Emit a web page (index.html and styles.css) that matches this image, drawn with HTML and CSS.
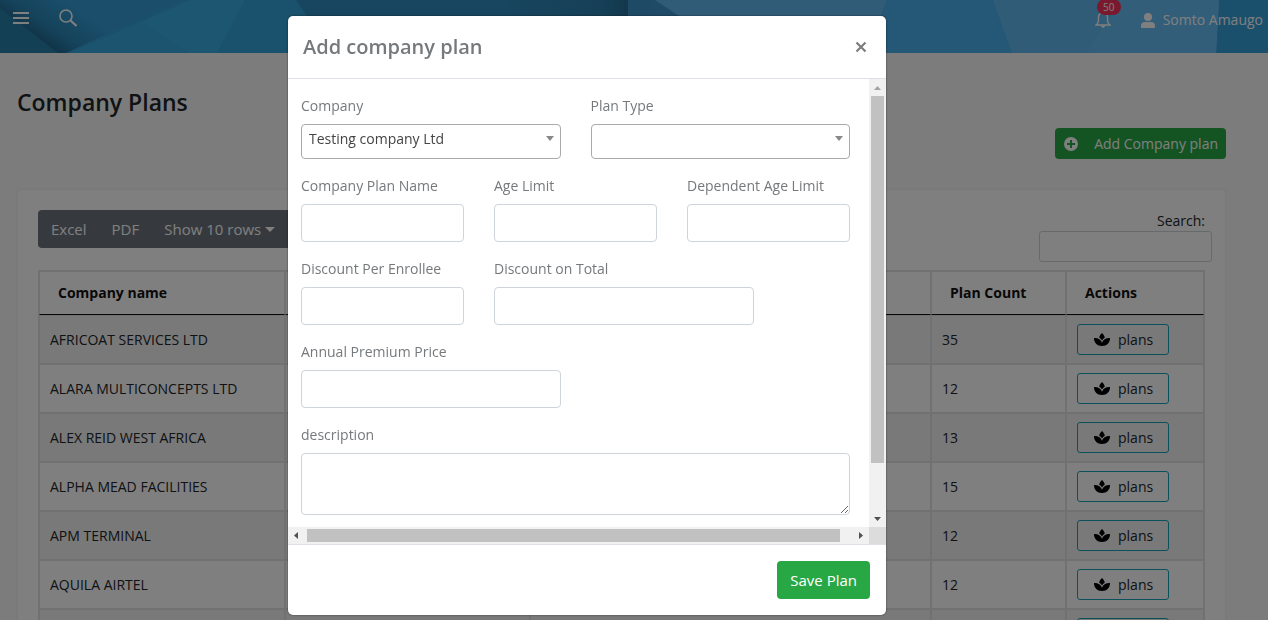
FILE: index.html
```html
<!DOCTYPE html>
<html lang="en">
<head>
<meta charset="utf-8">
<title>Company Plans</title>
<link rel="stylesheet" href="styles.css">
</head>
<body>
<svg class="sprite" aria-hidden="true">
  <symbol id="leaf" viewBox="0 0 18 14">
    <path d="M9 0c1.800 1.600 2.700 3.200 2.700 4.700C10.400 5.500 9.500 6.500 9 7.500 8.500 6.500 7.600 5.500 6.300 4.700 6.300 3.200 7.200 1.600 9 0z"/>
    <path d="M1 5c4-.2 7 1.600 8 4.700 1-3.100 4-4.900 8-4.700.1 4.700-3 8-8 8S.900 9.700 1 5z"/>
  </symbol>
  <symbol id="caret" viewBox="0 0 8 5"><path d="M0 0h8L4 5z"/></symbol>
</svg>

<header class="topbar">
  <svg class="topbar-art" viewBox="0 0 1268 53" preserveAspectRatio="none" aria-hidden="true">
    <defs>
      <linearGradient id="shade" gradientUnits="userSpaceOnUse" x1="24" y1="34" x2="52" y2="-8"><stop offset="0" stop-color="#1f6288"/><stop offset=".4" stop-color="#2b86b6"/><stop offset="1" stop-color="#349dd6"/></linearGradient>
      <linearGradient id="deep" x1="0" x2="1"><stop offset="0" stop-color="#308bbf"/><stop offset=".8" stop-color="#2c80ae"/><stop offset="1" stop-color="#266f98"/></linearGradient>
      <linearGradient id="steel" x1="0" x2="1"><stop offset="0" stop-color="#3d94cc"/><stop offset="1" stop-color="#4aaeee"/></linearGradient>
    </defs>
    <rect width="1268" height="53" fill="#35a1d9"/>
    <path d="M0 0h180L66 53H0z" fill="url(#shade)"/>
    <path d="M0 8l58 45H0z" fill="#2980ac"/>
    <path d="M190 0h55l-28 53H70z" fill="#38a9df"/>
    <path d="M190 0h55l-28 53h-28L143 22z" fill="#3aade2"/>
    <path d="M245 0h51l36 53H217z" fill="#35a3d9"/>
    <path d="M296 0h204v53H332z" fill="#308bbf"/>
    <path d="M500 0h128v53H500z" fill="url(#deep)"/>
    <path d="M628 0h372l12 53H628z" fill="url(#steel)"/>
    <path d="M655 0h232l-20 53H735z" fill="#60b8f0"/>
    <path d="M887 0h106l19 53H868z" fill="#4aaeec"/>
    <path d="M993 0h226l-3 53h-204z" fill="#60b8ee"/>
    <path d="M1120 0h99l-3 53h-129z" fill="#65bdf4"/>
  </svg>
  <nav class="topbar-row">
    <button class="icon-button" aria-label="Menu"><svg width="16" height="12" viewBox="0 0 16 12"><path d="M0 0h16v2H0zM0 5h16v2H0zM0 10h16v2H0z" fill="currentColor"/></svg></button>
    <button class="icon-button" aria-label="Search"><svg width="18" height="18" viewBox="0 0 18 18" fill="none" stroke="currentColor" stroke-width="1.600"><circle cx="7" cy="7" r="6"/><path d="M11.500 11.500l6 5.500" stroke-width="2.200"/></svg></button>
    <div class="account">
      <button class="bell icon-button" aria-label="Notifications">
        <svg width="16" height="16" viewBox="0 0 16 16"><path d="M1 13c1.500-1 2.500-2 2.500-5V5C3.500 2.500 5 1 8 1s4.500 1.500 4.500 4v3c0 3 1 4 2.500 5z" fill="none" stroke="currentColor" stroke-width="1.400"/><path d="M6 13.500h4c0 1.400-.8 2.200-2 2.200s-2-.8-2-2.200z" fill="currentColor"/></svg>
        <span class="badge">50</span>
      </button>
      <a class="user" href="#"><svg width="14" height="15" viewBox="0 0 14 15" fill="currentColor"><circle cx="7" cy="4" r="4"/><path d="M0 15v-2c0-2.500 1.500-4 4-4h6c2.500 0 4 1.500 4 4v1c0 .6-.4 1-1 1z"/></svg>Somto Amaugo</a>
    </div>
  </nav>
</header>

<main class="page">
  <h1 class="page-title">Company Plans</h1>
  <div class="page-actions">
    <button class="button add-button"><svg width="14" height="14" viewBox="0 0 14 14"><circle cx="7" cy="7" r="7" fill="#fff"/><path d="M3 7h8M7 3v8" stroke="#28a745" stroke-width="2"/></svg>Add Company plan</button>
  </div>
  <section class="card">
    <div class="tools">
      <div class="button-group">
        <button>Excel</button><button>PDF</button><button class="rows-button">Show 10 rows<svg width="10" height="5" viewBox="0 0 10 5" fill="currentColor"><path d="M0 0h10L5 5z"/></svg></button>
      </div>
      <div class="search"><label for="search">Search:</label><input id="search" type="search"></div>
    </div>
    <table class="plans">
      <colgroup><col class="col-name"><col class="col-second"><col><col class="col-count"><col class="col-actions"></colgroup>
      <thead><tr><th>Company name</th><th></th><th></th><th>Plan Count</th><th>Actions</th></tr></thead>
      <tbody>
        <tr><td>AFRICOAT SERVICES LTD</td><td></td><td></td><td>35</td><td><button class="plans-button"><svg width="18" height="14"><use href="#leaf"/></svg>plans</button></td></tr>
        <tr><td>ALARA MULTICONCEPTS LTD</td><td></td><td></td><td>12</td><td><button class="plans-button"><svg width="18" height="14"><use href="#leaf"/></svg>plans</button></td></tr>
        <tr><td>ALEX REID WEST AFRICA</td><td></td><td></td><td>13</td><td><button class="plans-button"><svg width="18" height="14"><use href="#leaf"/></svg>plans</button></td></tr>
        <tr><td>ALPHA MEAD FACILITIES</td><td></td><td></td><td>15</td><td><button class="plans-button"><svg width="18" height="14"><use href="#leaf"/></svg>plans</button></td></tr>
        <tr><td>APM TERMINAL</td><td></td><td></td><td>12</td><td><button class="plans-button"><svg width="18" height="14"><use href="#leaf"/></svg>plans</button></td></tr>
        <tr><td>AQUILA AIRTEL</td><td></td><td></td><td>12</td><td><button class="plans-button"><svg width="18" height="14"><use href="#leaf"/></svg>plans</button></td></tr>
        <tr><td></td><td></td><td></td><td></td><td><button class="plans-button" aria-label="Plans"></button></td></tr>
      </tbody>
    </table>
  </section>
</main>

<div class="backdrop">
  <div class="modal" role="dialog" aria-labelledby="modal-title">
    <div class="modal-header">
      <h2 id="modal-title">Add company plan</h2>
      <button class="close" aria-label="Close"><svg width="12" height="12" viewBox="0 0 12 12"><path d="M1.500 1.500l9 9M10.500 1.500l-9 9" stroke="currentColor" stroke-width="2.200"/></svg></button>
    </div>
    <div class="modal-body">
      <form class="plan-form" id="plan-form">
        <div class="field half"><label for="company">Company</label><div class="select-wrap"><select id="company"><option>Testing company Ltd</option></select><svg class="select-arrow" width="8" height="5"><use href="#caret"/></svg></div></div>
        <div class="field half"><label for="type">Plan Type</label><div class="select-wrap"><select id="type"><option></option></select><svg class="select-arrow" width="8" height="5"><use href="#caret"/></svg></div></div>
        <div class="field third"><label for="name">Company Plan Name</label><input id="name" type="text"></div>
        <div class="field third"><label for="age">Age Limit</label><input id="age" type="text"></div>
        <div class="field third"><label for="dependent">Dependent Age Limit</label><input id="dependent" type="text"></div>
        <div class="field third"><label for="discount">Discount Per Enrollee</label><input id="discount" type="text"></div>
        <div class="field half"><label for="total">Discount on Total</label><input id="total" type="text"></div>
        <div class="field half row-start"><label for="premium">Annual Premium Price</label><input id="premium" type="text"></div>
        <div class="field full"><label for="description">description</label><textarea id="description"></textarea></div>
      </form>
      <div class="scroll-y" aria-hidden="true">
        <svg width="17" height="17"><path d="M5 11h7L8.500 7z" fill="#a3a3a3"/></svg>
        <span class="thumb"></span><span class="track"></span>
        <svg width="17" height="17"><path d="M5 7h7l-3.500 4z" fill="#505050"/></svg>
      </div>
      <div class="scroll-x" aria-hidden="true">
        <svg width="17" height="17"><path d="M10 5v7L6 8.500z" fill="#505050"/></svg>
        <span class="thumb"></span><span class="track"></span>
        <svg width="17" height="17"><path d="M7 5v7l4-3.500z" fill="#505050"/></svg>
      </div>
      <div class="scroll-corner"></div>
    </div>
    <div class="modal-footer"><button class="button save-button" type="submit" form="plan-form">Save Plan</button></div>
  </div>
</div>
</body>
</html>
```
FILE: styles.css
```css
* { box-sizing: border-box; }
html, body { height: 100%; }
body {
  margin: 0;
  display: flex;
  flex-direction: column;
  overflow: hidden;
  background: #f8f8f8;
  color: #212529;
  font: 14px/20px "Open Sans", "Noto Sans", sans-serif;
}
button, input, select, textarea { font: inherit; color: inherit; }
button { cursor: pointer; }
svg { display: block; flex: none; }
.sprite { position: absolute; width: 0; height: 0; }

/* Top bar */
.topbar { position: relative; flex: none; height: 53px; color: #fff; }
.topbar-art { position: absolute; inset: 0; width: 100%; height: 100%; }
.topbar-row { position: relative; display: flex; align-items: center; gap: 30px; height: 36px; padding: 0 5px 0 13px; }
.icon-button { border: 0; padding: 0; background: none; color: #fff; }
.account { display: flex; align-items: center; gap: 30px; margin-left: auto; padding-top: 4px; }
.bell { position: relative; }
.badge {
  position: absolute; left: 2px; top: -13px;
  width: 24px; border-radius: 8px;
  background: #f5325c; font-size: 10px; line-height: 16px; text-align: center;
}
.user { display: flex; align-items: center; gap: 8px; color: #fff; text-decoration: none; }

/* Page */
.page { flex: 1; min-height: 0; overflow: hidden; padding: 33px 42px 0 17px; }
.page-title { margin: 0; font-size: 23px; line-height: 32px; font-weight: 600; }
.page-actions { display: flex; justify-content: flex-end; padding: 10px 0 31px; }
.button { border: 0; border-radius: 4px; background: #28a745; color: #fff; }
.add-button { display: flex; align-items: center; gap: 16px; height: 31px; padding: 0 8px 0 9px; }
.card { margin: 0 1px; padding: 20px 20px 0; border-radius: 4px; background: #fff; box-shadow: 0 0 3px #e4e4e4; }
.tools { display: flex; justify-content: space-between; height: 60px; }
.button-group { display: flex; height: 38px; border-radius: 4px; background: #6c757d; font-size: 15px; }
.button-group button { display: flex; align-items: center; gap: 4px; border: 0; padding: 0 12px 0 13px; background: none; color: #fff; }
.button-group .rows-button { padding-right: 24px; }
.search { display: flex; flex-direction: column; align-items: flex-end; padding-top: 1px; }
.search input { width: 173px; height: 31px; margin-right: -7px; border: 1px solid #ced4da; border-radius: 3px; background: #fff; flex: none; }

.plans { width: 100%; table-layout: fixed; border: 1px solid #dee2e6; border-collapse: separate; border-spacing: 0; }
.col-name { width: 246px; }
.col-second { width: 245px; }
.col-count { width: 135px; }
.col-actions { width: 138px; }
.plans th { height: 44px; padding: 0 18px; border: 1px solid #dee2e6; border-bottom-color: #111; text-align: left; font-weight: 700; color: #111; }
.plans td { height: 49px; padding: 0 10px; border: 1px solid #dee2e6; }
.plans tbody tr:nth-child(odd) { background: #f2f2f2; }
.plans-button {
  display: flex; align-items: center; gap: 7px;
  width: 92px; height: 31px; padding: 0 15px;
  border: 1px solid #17a2b8; border-radius: 3px; background: none;
}

/* Dialog */
.backdrop { position: fixed; inset: 0; display: flex; justify-content: center; align-items: flex-start; padding: 16px 94px 0 0; background: rgba(0, 0, 0, .5); }
.modal { width: 598px; border-radius: 5px; background: #fff; color: #76797c; box-shadow: 0 0 2px rgba(0, 0, 0, .6); }
.modal-header { display: flex; align-items: center; justify-content: space-between; padding: 16px 19px 16px 15px; border-bottom: 1px solid #dee2e6; }
.modal-header h2 { margin: 0; font-size: 20px; line-height: 30px; font-weight: 600; }
.close { border: 0; padding: 0; background: none; color: #7d7d7d; }
.modal-body { display: grid; grid-template-columns: minmax(0, 1fr) 17px; grid-template-rows: auto 17px; }
.plan-form { display: grid; grid-template-columns: repeat(12, minmax(0, 1fr)); gap: 17px 30px; padding: 17px 19px 12px 13px; }
.field { display: flex; flex-direction: column; gap: 8px; }
.half { grid-column-end: span 6; }
.third { grid-column-end: span 4; }
.full { grid-column: 1 / -1; }
.row-start { grid-column-start: 1; }
.field input, .field textarea { width: 100%; height: 38px; padding: 6px 12px; border: 1px solid #ced4da; border-radius: 4px; background: #fff; }
.field textarea { display: block; height: 62px; }
.select-wrap { position: relative; }
.select-wrap select { display: block; appearance: none; width: 100%; height: 35px; padding: 0 24px 5px 7px; border: 1px solid #aaa; border-radius: 4px; background: #fff; color: #444; }
.select-arrow { position: absolute; right: 7px; top: 12px; fill: #888; pointer-events: none; }

.scroll-y, .scroll-x { display: flex; background: #f1f1f1; }
.scroll-y { flex-direction: column; }
.scroll-y .thumb { flex: 367; margin: 0 2px; }
.scroll-y .track { flex: 47; }
.scroll-x .thumb { flex: 533; margin: 2px 0 2px 2px; }
.scroll-x .track { flex: 12; }
.thumb { background: #c1c1c1; }
.scroll-corner { background: #dcdcdc; }
.modal-footer { display: flex; justify-content: flex-end; padding: 16px; border-top: 1px solid #dee2e6; }
.save-button { height: 38px; padding: 0 13px; font-size: 15px; }
```
